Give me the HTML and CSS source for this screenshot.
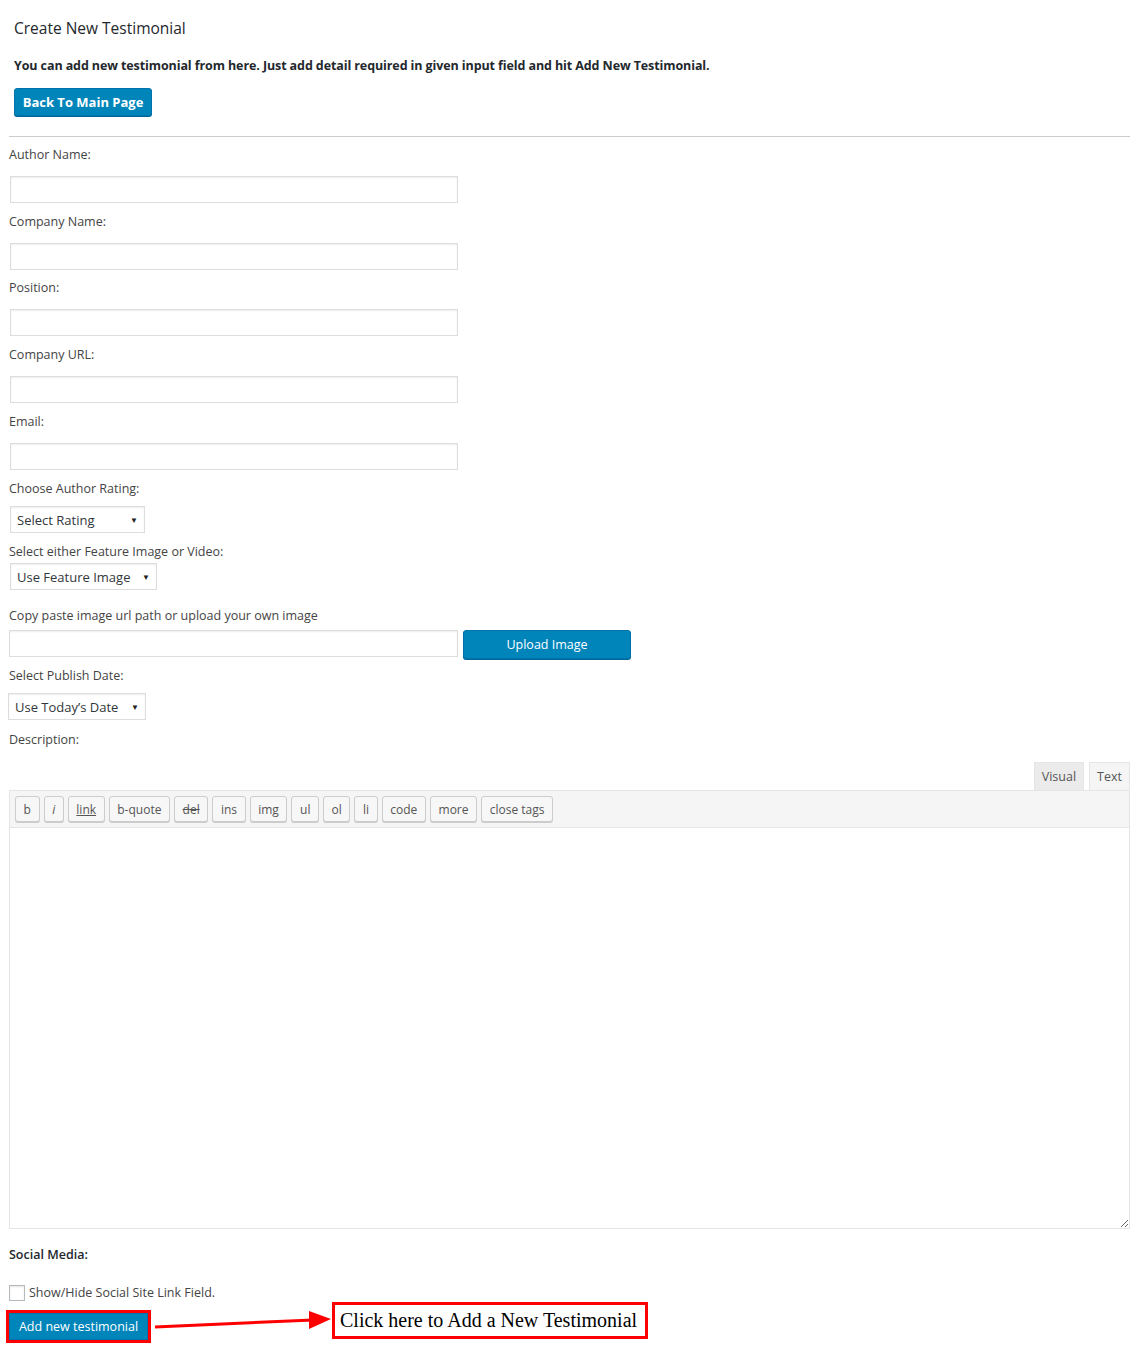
FILE: index.html
```html
<!DOCTYPE html>
<html>
<head>
<meta charset="utf-8">
<title>Create New Testimonial</title>
<link rel="stylesheet" href="styles.css">
</head>
<body>
<div class="wrap">
  <div class="intro">
    <h1 class="title">Create New Testimonial</h1>
    <p class="lead">You can add new testimonial from here. Just add detail required in given input field and hit Add New Testimonial.</p>
    <a class="btn-primary btn-back" href="#">Back To Main Page</a>
  </div>
  <hr class="sep">

  <form class="form">
    <label class="lbl lbl-first">Author Name:</label>
    <input class="txt" type="text">

    <label class="lbl">Company Name:</label>
    <input class="txt" type="text">

    <label class="lbl lbl-short">Position:</label>
    <input class="txt" type="text">

    <label class="lbl">Company URL:</label>
    <input class="txt" type="text">

    <label class="lbl">Email:</label>
    <input class="txt" type="text">

    <label class="lbl">Choose Author Rating:</label>
    <div class="sel sel-rating"><span>Select Rating</span><span class="caret">▼</span></div>

    <label class="lbl">Select either Feature Image or Video:</label>
    <div class="sel sel-feature"><span>Use Feature Image</span><span class="caret">▼</span></div>

    <label class="lbl lbl-url">Copy paste image url path or upload your own image</label>
    <div class="url-row">
      <input class="txt" type="text">
      <a class="btn-primary btn-upload" href="#">Upload Image</a>
    </div>

    <label class="lbl lbl-date">Select Publish Date:</label>
    <div class="sel sel-date"><span>Use Today’s Date</span><span class="caret">▼</span></div>

    <label class="lbl lbl-desc">Description:</label>

    <div class="editor">
      <div class="tabs">
        <span class="tab">Visual</span>
        <span class="tab tab-active">Text</span>
      </div>
      <div class="toolbar">
        <span class="qt">b</span>
        <span class="qt qt-i">i</span>
        <span class="qt qt-link">link</span>
        <span class="qt">b-quote</span>
        <span class="qt qt-del">del</span>
        <span class="qt">ins</span>
        <span class="qt">img</span>
        <span class="qt">ul</span>
        <span class="qt">ol</span>
        <span class="qt">li</span>
        <span class="qt">code</span>
        <span class="qt">more</span>
        <span class="qt">close tags</span>
      </div>
      <textarea class="area"></textarea>
    </div>

    <div class="social">Social Media:</div>
    <div class="check-row">
      <span class="check"></span>
      <span class="check-lbl">Show/Hide Social Site Link Field.</span>
    </div>

    <div class="submit-row">
      <div class="hl-btn"><a class="btn-primary btn-add" href="#">Add new testimonial</a></div>
      <svg class="arrow" width="181" height="40" viewBox="0 0 181 40">
        <line x1="4" y1="25" x2="162" y2="18" stroke="#ff0000" stroke-width="3"/>
        <polygon points="158,9 180,17 158,27" fill="#ff0000"/>
      </svg>
      <div class="callout">Click here to Add a New Testimonial</div>
    </div>
  </form>
</div>
</body>
</html>
```
FILE: styles.css
```css
* { box-sizing: border-box; }
body {
  margin: 0;
  background: #fff;
  font-family: "Open Sans", "Noto Sans", sans-serif;
  font-size: 12.5px;
  color: #444;
}
.wrap {
  padding: 0 12px 0 9px;
}
.intro {
  padding-left: 5px;
}
.title {
  margin: 17px 0 0;
  font-size: 15.5px;
  line-height: 22px;
  font-weight: 400;
  color: #23282d;
}
.lead {
  margin: 18px 0 0;
  font-size: 12.5px;
  line-height: 18px;
  font-weight: 700;
  color: #23282d;
  letter-spacing: -0.1px;
}
.btn-primary {
  display: inline-flex;
  align-items: center;
  justify-content: center;
  background: #0085ba;
  border: 1px solid #0073aa;
  border-radius: 3px;
  color: #fff;
  text-decoration: none;
  box-shadow: 0 1px 0 #006799;
  white-space: nowrap;
}
.btn-back {
  margin-top: 13px;
  width: 138px;
  height: 28px;
  font-weight: 700;
  font-size: 13px;
}
.sep {
  margin: 20px 0 0;
  border: 0;
  border-top: 1px solid #ccc;
  height: 0;
}
.form {
  display: flex;
  flex-direction: column;
  align-items: flex-start;
}
.lbl {
  display: block;
  margin-top: 10px;
  line-height: 18px;
  height: 18px;
}
.lbl-first { margin-top: 9px; }
.lbl-short { margin-top: 9px; }
.txt {
  display: block;
  margin: 12px 0 0 1px;
  width: 448px;
  height: 27px;
  border: 1px solid #ddd;
  box-shadow: inset 0 1px 2px rgba(0,0,0,0.07);
  background: #fff;
  font: inherit;
  padding: 2px 6px;
}
.sel {
  margin: 8px 0 0 1px;
  height: 27px;
  display: inline-flex;
  align-items: center;
  justify-content: space-between;
  border: 1px solid #ddd;
  box-shadow: inset 0 1px 2px rgba(0,0,0,0.07);
  padding: 0 6px 0 6px;
  font-size: 13px;
  color: #32373c;
  background: #fff;
  white-space: nowrap;
}
.caret {
  font-size: 8px;
  color: #222;
  margin-left: 4px;
}
.sel-rating { width: 135px; }
.sel-feature { width: 147px; margin-top: 2px; }
.sel-date { width: 138px; margin-left: -1px; }
.lbl-url { margin-top: 17px; }
.url-row {
  margin-top: 5px;
  display: flex;
  align-items: flex-start;
  gap: 5px;
}
.url-row .txt {
  margin: 0;
  width: 449px;
}
.btn-upload {
  width: 168px;
  height: 29px;
  font-size: 12.5px;
}
.lbl-date { margin-top: 8px; }
.lbl-desc { margin-top: 11px; }
.editor {
  margin-top: 13px;
  width: 100%;
  display: flex;
  flex-direction: column;
}
.tabs {
  display: flex;
  justify-content: flex-end;
  gap: 5px;
  height: 28px;
}
.tab {
  height: 28px;
  padding: 0 7px;
  display: inline-flex;
  align-items: center;
  background: #ebebeb;
  border: 1px solid #e5e5e5;
  border-bottom: 0;
  color: #555;
  font-size: 12.5px;
}
.tab-active {
  background: #f5f5f5;
  color: #555;
}
.toolbar {
  height: 38px;
  background: #f5f5f5;
  border: 1px solid #e5e5e5;
  padding: 5px 5px;
  display: flex;
  gap: 4px;
}
.qt {
  height: 26px;
  padding: 0 7.6px;
  display: inline-flex;
  align-items: center;
  background: #f7f7f7;
  border: 1px solid #ccc;
  border-radius: 3px;
  box-shadow: 0 1px 0 #ccc;
  color: #555;
  font-size: 12px;
}
.qt-i { font-style: italic; }
.qt-link { text-decoration: underline; }
.qt-del { text-decoration: line-through; }
.area {
  display: block;
  width: 100%;
  height: 401px;
  border: 1px solid #e5e5e5;
  border-top: 0;
  resize: vertical;
  background: #fff;
  margin: 0;
}
.social {
  margin-top: 17px;
  line-height: 18px;
  font-weight: 600;
  color: #23282d;
}
.check-row {
  margin-top: 21px;
  display: flex;
  align-items: center;
  height: 16px;
  gap: 4px;
}
.check {
  width: 16px;
  height: 16px;
  border: 1px solid #b4b9be;
  background: #fff;
  box-shadow: inset 0 1px 2px rgba(0,0,0,0.1);
}
.check-lbl { line-height: 16px; }
.submit-row {
  display: flex;
  align-items: flex-start;
  margin-left: -3px;
  margin-top: 1px;
}
.hl-btn {
  margin-top: 8px;
  border: 3px solid #ff0000;
}
.btn-add {
  width: 139px;
  height: 27px;
  font-size: 12.5px;
  border-radius: 0;
  box-shadow: none;
}
.arrow {
  display: block;
  margin: 0;
}
.callout {
  height: 37px;
  width: 316px;
  border: 3px solid #ff0000;
  display: flex;
  align-items: center;
  padding-left: 5px;
  font-family: "Liberation Serif", "Times New Roman", serif;
  font-size: 20px;
  color: #000;
  white-space: nowrap;
}
```
